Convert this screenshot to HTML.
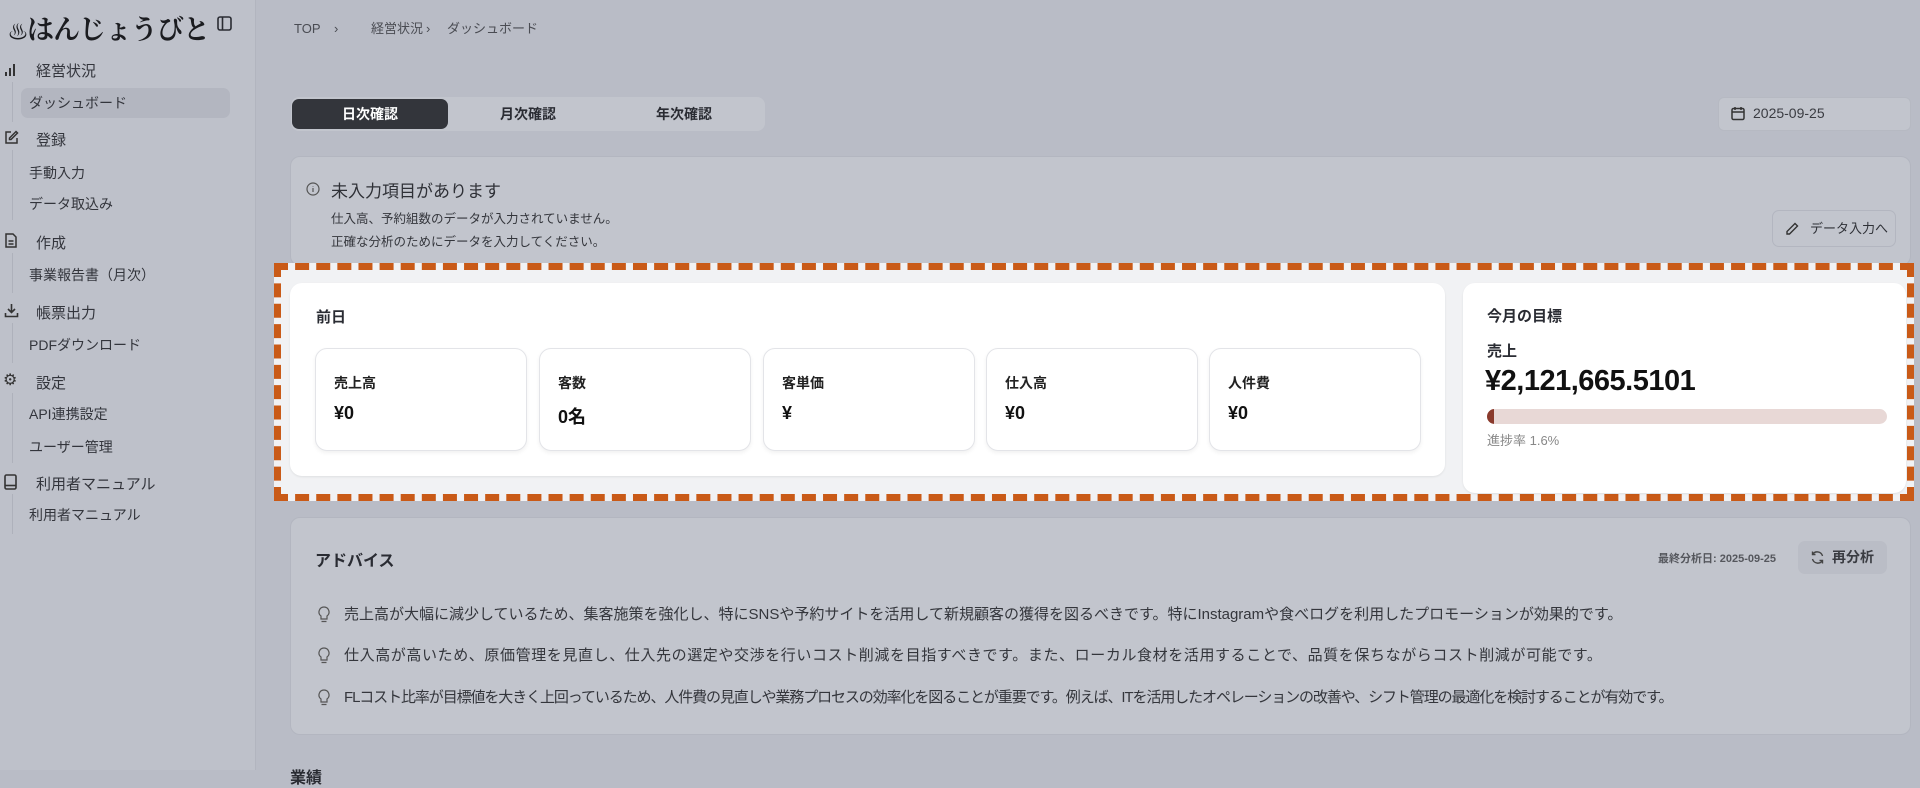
<!DOCTYPE html>
<html style="background:#b9bcc6"><head><meta charset="utf-8"><style>
*{box-sizing:border-box;margin:0;padding:0}
body{width:1920px;height:770px;overflow:hidden;background:#b9bcc6;font-family:"Liberation Sans","Noto Sans CJK JP",sans-serif;color:#2a2c33;position:relative}
.abs{position:absolute}
.side{left:0;top:0;width:256px;height:770px;background:#bec1ca;border-right:1px solid #b2b5bf}
.nav{font-size:15px;color:#33353c;white-space:nowrap}
.sub{left:21px;width:209px;padding-left:8px;height:30px;line-height:30px;font-size:14px;color:#33353c}
.vl{left:30px;width:1px;background:#aeb1bb}
.card{background:#c2c5cd;border:1px solid #b3b6c0;border-radius:10px}
.wcard{background:#fff;border-radius:12px;box-shadow:0 1px 2px rgba(0,0,0,.08)}
.sc{background:#fff;border:1px solid #e3e4e8;border-radius:12px;box-shadow:0 2px 4px rgba(0,0,0,.06);top:348px;height:103px;width:212px}
.sc .l{position:absolute;left:18px;top:24px;font-size:14px;font-weight:bold;color:#222}
.sc .v{position:absolute;left:18px;top:54px;font-size:18px;font-weight:bold;color:#111}
.adv{left:344px;font-size:15px;line-height:20px;color:#34363c;white-space:nowrap}
.bulb{left:318px}
.bc{top:20px;font-size:13px;line-height:18px;height:18px;color:#4a4c53}
</style></head><body>
<div class="abs side"></div>
<div class="abs" style="left:8px;top:8px;font-size:27px;font-weight:bold;color:#1b1c20;font-family:'Noto Serif CJK SC','Noto Sans CJK JP',serif;letter-spacing:-1px">
<span style="font-size:20px;font-weight:normal">♨</span>はんじょうびと</div>
<svg class="abs" style="left:217px;top:16px" width="15" height="15" viewBox="0 0 15 15"><rect x="1" y="1" width="13" height="13" rx="2" fill="none" stroke="#2a2c33" stroke-width="1.6"/><line x1="5.5" y1="1" x2="5.5" y2="14" stroke="#2a2c33" stroke-width="1.6"/></svg>

<svg class="abs" style="left:5px;top:64px" width="10" height="12"><rect x="0" y="8" width="2" height="4" fill="#333"/><rect x="4" y="4" width="2" height="8" fill="#333"/><rect x="8" y="0" width="2" height="12" fill="#333"/></svg>
<div class="abs nav" style="left:36px;top:60px">経営状況</div>
<div class="abs vl" style="top:82px;height:40px;left:12px"></div>
<div class="abs sub" style="top:88px;background:#b3b6c0;border-radius:7px">ダッシュボード</div>

<svg class="abs" style="left:4px;top:130px" width="15" height="15" viewBox="0 0 15 15" fill="none" stroke="#333" stroke-width="1.5"><path d="M7 2H2v11h11V8"/><path d="M12 1.5l1.5 1.5L7 9.5H5.5V8z"/></svg>
<div class="abs nav" style="left:36px;top:129px">登録</div>
<div class="abs vl" style="top:150px;height:70px;left:12px"></div>
<div class="abs sub" style="top:158px">手動入力</div>
<div class="abs sub" style="top:189px">データ取込み</div>

<svg class="abs" style="left:5px;top:233px" width="12" height="15" viewBox="0 0 12 15" fill="none" stroke="#333" stroke-width="1.5"><path d="M1 1h7l3 3v10H1z"/><path d="M3.5 8h5M3.5 11h5"/></svg>
<div class="abs nav" style="left:36px;top:232px">作成</div>
<div class="abs vl" style="top:253px;height:40px;left:12px"></div>
<div class="abs sub" style="top:260px">事業報告書（月次）</div>

<svg class="abs" style="left:4px;top:303px" width="15" height="15" viewBox="0 0 15 15" fill="none" stroke="#333" stroke-width="1.6"><path d="M7.5 1v8M4 6l3.5 3.5L11 6M1.5 10v3.5h12V10"/></svg>
<div class="abs nav" style="left:36px;top:302px">帳票出力</div>
<div class="abs vl" style="top:323px;height:40px;left:12px"></div>
<div class="abs sub" style="top:330px">PDFダウンロード</div>

<div class="abs" style="left:3px;top:370px;font-size:16px;color:#333">⚙</div>
<div class="abs nav" style="left:36px;top:372px">設定</div>
<div class="abs vl" style="top:393px;height:70px;left:12px"></div>
<div class="abs sub" style="top:399px">API連携設定</div>
<div class="abs sub" style="top:432px">ユーザー管理</div>

<svg class="abs" style="left:4px;top:474px" width="13" height="16" viewBox="0 0 13 16" fill="none" stroke="#333" stroke-width="1.6"><rect x="1" y="1" width="11" height="14" rx="1.5"/><path d="M1 11.5h11"/></svg>
<div class="abs nav" style="left:36px;top:473px">利用者マニュアル</div>
<div class="abs vl" style="top:494px;height:40px;left:12px"></div>
<div class="abs sub" style="top:500px">利用者マニュアル</div>

<div class="abs bc" style="left:294px">TOP</div>
<div class="abs bc" style="left:334px">›</div>
<div class="abs bc" style="left:371px">経営状況</div>
<div class="abs bc" style="left:426px">›</div>
<div class="abs bc" style="left:447px">ダッシュボード</div>

<div class="abs" style="left:291px;top:97px;width:474px;height:34px;background:#c2c5cd;border-radius:8px"></div>
<div class="abs" style="left:292px;top:99px;width:156px;height:30px;background:#33353b;border-radius:7px;color:#fff;font-size:14px;font-weight:bold;text-align:center;line-height:30px">日次確認</div>
<div class="abs" style="left:450px;top:99px;width:156px;height:30px;font-size:14px;font-weight:bold;text-align:center;line-height:30px">月次確認</div>
<div class="abs" style="left:606px;top:99px;width:156px;height:30px;font-size:14px;font-weight:bold;text-align:center;line-height:30px">年次確認</div>

<div class="abs" style="left:1718px;top:97px;width:193px;height:34px;background:#c2c5cd;border-radius:6px;border:1px solid #b6b9c2"></div>
<svg class="abs" style="left:1731px;top:106px" width="14" height="15" viewBox="0 0 14 15" fill="none" stroke="#333" stroke-width="1.5"><rect x="1" y="2.5" width="12" height="11" rx="1.5"/><path d="M1 6h12M4 1v3M10 1v3"/></svg>
<div class="abs" style="left:1753px;top:105px;font-size:14px;color:#3a3c42">2025-09-25</div>

<div class="abs card" style="left:290px;top:156px;width:1621px;height:110px"></div>
<svg class="abs" style="left:306px;top:182px" width="14" height="14" viewBox="0 0 14 14" fill="none" stroke="#555" stroke-width="1.2"><circle cx="7" cy="7" r="6"/><path d="M7 6v4M7 4v.5"/></svg>
<div class="abs" style="left:331px;top:177px;font-size:17px;color:#2f3137">未入力項目があります</div>
<div class="abs" style="left:331px;top:208px;font-size:12.5px;color:#34363c">仕入高、予約組数のデータが入力されていません。</div>
<div class="abs" style="left:331px;top:231px;font-size:12.5px;color:#34363c">正確な分析のためにデータを入力してください。</div>
<div class="abs" style="left:1772px;top:210px;width:124px;height:37px;background:#c2c5cd;border:1px solid #b3b6c0;border-radius:7px;font-size:13px;line-height:35px;padding-left:37px;white-space:nowrap;color:#2f3137">データ入力へ</div>
<svg class="abs" style="left:1785px;top:222px" width="14" height="14" viewBox="0 0 14 14" fill="none" stroke="#333" stroke-width="1.4"><path d="M10 1.5l2.5 2.5L4.5 12H2v-2.5z"/></svg>

<div class="abs" style="left:274px;top:263px;width:1640px;height:238px;background:#f1f2f4;border:7px dashed #c95a17"></div>
<div class="abs wcard" style="left:290px;top:283px;width:1155px;height:193px"></div>
<div class="abs" style="left:316px;top:306px;font-size:15px;font-weight:bold">前日</div>
<div class="abs sc" style="left:315px"><div class="l">売上高</div><div class="v">¥0</div></div>
<div class="abs sc" style="left:539px"><div class="l">客数</div><div class="v">0名</div></div>
<div class="abs sc" style="left:763px"><div class="l">客単価</div><div class="v">¥</div></div>
<div class="abs sc" style="left:986px"><div class="l">仕入高</div><div class="v">¥0</div></div>
<div class="abs sc" style="left:1209px"><div class="l">人件費</div><div class="v">¥0</div></div>

<div class="abs wcard" style="left:1463px;top:283px;width:443px;height:210px"></div>
<div class="abs" style="left:1487px;top:305px;font-size:15px;font-weight:bold">今月の目標</div>
<div class="abs" style="left:1487px;top:340px;font-size:15px;font-weight:bold">売上</div>
<div class="abs" style="left:1485px;top:365px;font-size:29px;font-weight:bold;color:#111;letter-spacing:-0.5px">¥2,121,665.5101</div>
<div class="abs" style="left:1487px;top:409px;width:400px;height:15px;background:#e8d8d6;border-radius:8px;overflow:hidden"><div style="width:7px;height:15px;background:#8a3a2c"></div></div>
<div class="abs" style="left:1487px;top:430px;font-size:13px;color:#888">進捗率 1.6%</div>

<div class="abs card" style="left:290px;top:517px;width:1621px;height:218px"></div>
<div class="abs" style="left:315px;top:547px;font-size:16px;font-weight:bold;color:#2a2c33">アドバイス</div>
<div class="abs" style="left:1658px;top:550px;font-size:11px;color:#55575d;font-weight:bold">最終分析日: 2025-09-25</div>
<div class="abs" style="left:1798px;top:541px;width:89px;height:33px;background:#babdc6;border-radius:7px;font-size:14px;line-height:33px;padding-left:34px;color:#3a3c42;font-weight:bold">再分析</div>
<svg class="abs" style="left:1810px;top:550px" width="15" height="15" viewBox="0 0 15 15" fill="none" stroke="#444" stroke-width="1.4"><path d="M12.5 6A5.5 5.5 0 0 0 2.5 4.5M2.5 9a5.5 5.5 0 0 0 10 1.5"/><path d="M2.5 1.5v3h3M12.5 13.5v-3h-3"/></svg>

<svg class="abs bulb" style="top:606px" width="12" height="18" viewBox="0 0 12 18" fill="none" stroke="#555" stroke-width="1.2"><path d="M6 1a5 5 0 0 0-3 9v3h6v-3a5 5 0 0 0-3-9zM3.5 15.5h5"/></svg>
<div class="abs adv" style="top:605px">売上高が大幅に減少しているため、集客施策を強化し、特にSNSや予約サイトを活用して新規顧客の獲得を図るべきです。特にInstagramや食べログを利用したプロモーションが効果的です。</div>
<svg class="abs bulb" style="top:647px" width="12" height="18" viewBox="0 0 12 18" fill="none" stroke="#555" stroke-width="1.2"><path d="M6 1a5 5 0 0 0-3 9v3h6v-3a5 5 0 0 0-3-9zM3.5 15.5h5"/></svg>
<div class="abs adv" style="top:646px;letter-spacing:0.6px">仕入高が高いため、原価管理を見直し、仕入先の選定や交渉を行いコスト削減を目指すべきです。また、ローカル食材を活用することで、品質を保ちながらコスト削減が可能です。</div>
<svg class="abs bulb" style="top:689px" width="12" height="18" viewBox="0 0 12 18" fill="none" stroke="#555" stroke-width="1.2"><path d="M6 1a5 5 0 0 0-3 9v3h6v-3a5 5 0 0 0-3-9zM3.5 15.5h5"/></svg>
<div class="abs adv" style="top:688px;letter-spacing:-1.1px">FLコスト比率が目標値を大きく上回っているため、人件費の見直しや業務プロセスの効率化を図ることが重要です。例えば、ITを活用したオペレーションの改善や、シフト管理の最適化を検討することが有効です。</div>

<div class="abs" style="left:290px;top:764px;font-size:16px;font-weight:bold;color:#2a2c33">業績</div>
</body></html>
